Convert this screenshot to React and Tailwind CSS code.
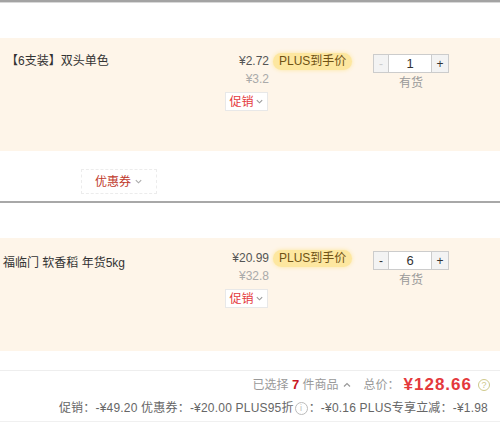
import React from 'react';

const items = [
  { name: '【6支装】双头单色', price: '¥2.72', orig: '¥3.2', qty: 1, minusOff: true, pad: 'pt-[14px]', namePad: 'pt-[0px] pl-[6px]' },
  { name: '福临门 软香稻 年货5kg', price: '¥20.99', orig: '¥32.8', qty: 6, minusOff: false, pad: 'pt-[11px]', namePad: 'pt-[5px] pl-[3px]' },
];

function Chevron({ className }) {
  return (
    <svg viewBox="0 0 10 10" className={className} fill="none" stroke="currentColor" strokeWidth="1.2">
      <path d="M2 3.5 L5 6.5 L8 3.5" />
    </svg>
  );
}

function Item({ item }) {
  return (
    <div className={`h-[113px] bg-[#fef5e9] flex ${item.pad}`}>
      <div className={`w-[225px] text-[12px] text-[#333] leading-[18px] ${item.namePad}`}>{item.name}</div>
      <div className="w-[148px] flex flex-col">
        <div className="flex items-center h-[18px]">
          <span className="w-[44px] text-right text-[12px] text-[#555] whitespace-nowrap">{item.price}</span>
          <span className="ml-[4px] h-[17px] px-[6px] rounded-full bg-[#fde7a0] shadow-[0_0_4px_#fde7a0] text-[12px] leading-[17px] text-[#6f5214] whitespace-nowrap">PLUS到手价</span>
        </div>
        <div className="w-[44px] text-right text-[12px] text-[#aaa] leading-[18px]">{item.orig}</div>
        <div className="mt-[4px] w-[43px] h-[19px] bg-white border border-[#e8e8e8] flex items-center justify-center gap-[1px] text-[12px] text-[#e4393c]">
          促销<Chevron className="w-[9px] h-[9px] text-[#999]" />
        </div>
      </div>
      <div className="flex flex-col items-center w-[76px] pt-[2px]">
        <div className="flex h-[19px] w-[76px] border border-[#ccc] bg-white text-[12px]">
          <div className={`w-[15px] border-r border-[#ccc] bg-[#f3f3f3] flex items-center justify-center ${item.minusOff ? 'text-[#ccc]' : 'text-[#333]'}`}>-</div>
          <div className="flex-1 flex items-center justify-center text-[13px] text-[#333]">{item.qty}</div>
          <div className="w-[17px] border-l border-[#ccc] bg-[#f3f3f3] flex items-center justify-center text-[#333]">+</div>
        </div>
        <div className="mt-[1px] text-[12px] text-[#999] leading-[18px]">有货</div>
      </div>
    </div>
  );
}

export default function App() {
  return (
    <div className="w-[500px] h-[429px] overflow-hidden bg-white font-['Liberation_Sans','Noto_Sans_CJK_SC',sans-serif]">
      <div className="h-[2px] bg-[#a3a3a3]" />
      <div className="h-[1px] bg-[#d8d8d8]" />
      <div className="h-[35px]" />
      <Item item={items[0]} />
      <div className="h-[50px] pl-[81px] pt-[18px]">
        <div className="w-[76px] h-[25px] border border-dashed border-[#ececec] flex items-center justify-center gap-[3px] text-[12px] text-[#c0392b]">
          优惠券<Chevron className="w-[9px] h-[9px] text-[#aaa]" />
        </div>
      </div>
      <div className="h-[2px] bg-[#a8a8a8]" />
      <div className="h-[35px]" />
      <Item item={items[1]} />
      <div className="h-[19px]" />
      <div className="h-[1px] bg-[#eeeeee]" />
      <div className="flex items-center justify-end h-[28px] pr-[10px] text-[12px] text-[#999]">
        <span>已选择 <b className="text-[#c81623] text-[13px]">7</b> 件商品</span>
        <Chevron className="w-[10px] h-[10px] ml-[3px] rotate-180 text-[#999]" />
        <span className="ml-[12px] text-[#999]">总价：</span>
        <span className="ml-[4px] text-[17px] font-bold text-[#e4393c] tracking-[1px]">¥128.66</span>
        <span className="ml-[6px] w-[12px] h-[12px] rounded-full border border-[#cfc98a] text-[9px] leading-[10px] text-center text-[#cfc98a]">?</span>
      </div>
      <div className="flex justify-end items-center pr-[12px] text-[12px] text-[#666] whitespace-nowrap tracking-[0.2px]">
        <span>促销：-¥49.20 优惠券：-¥20.00 PLUS95折</span>
        <span className="mx-[1px] w-[13px] h-[13px] rounded-full border border-[#bbb] text-[9px] leading-[11px] text-center text-[#bbb]">i</span>
        <span>：-¥0.16 PLUS专享立减：-¥1.98</span>
      </div>
      <div className="mt-[4px] h-[1px] bg-[#f0f0f0]" />
    </div>
  );
}
